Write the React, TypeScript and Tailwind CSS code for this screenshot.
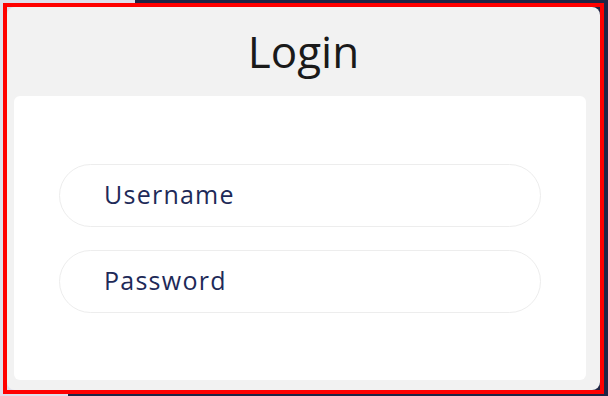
export default function App() {
  return (
    <div className="w-[608px] h-[396px] flex flex-col bg-[#1f2545] overflow-hidden">
      <div className="h-[3px] flex">
        <div className="w-[135px] bg-[#dfe0ec]" />
        <div className="flex-1" />
      </div>
      <div className="flex-1 flex min-h-0">
        <div className="w-[3px] bg-[#dfe0ec]" />
        <div className="flex-1 border-4 border-[#ff0000] bg-[linear-gradient(to_right,#dfe0ec_50%,#1f2545_50%)] flex">
          <div className="flex-1 flex flex-col bg-[#f2f2f2] rounded-lg">
            <div className="h-[89px] flex items-center justify-center">
              <h1 className="text-[44px] leading-none text-[#1a1a1a] font-['Open_Sans',sans-serif] -mt-px">
                Login
              </h1>
            </div>
            <div className="ml-[7px] mr-[14px] mb-[10px] flex-1 bg-white rounded-md flex flex-col justify-center gap-[23px] px-[45px]">
              <div className="h-[63px] rounded-full border border-[#ededed] flex items-center pl-[44px]">
                <span className="text-[25px] tracking-[0.05em] text-[#1e2a58] font-['Open_Sans',sans-serif]">Username</span>
              </div>
              <div className="h-[63px] rounded-full border border-[#ededed] flex items-center pl-[44px]">
                <span className="text-[25px] tracking-[0.05em] text-[#1e2a58] font-['Open_Sans',sans-serif]">Password</span>
              </div>
            </div>
          </div>
        </div>
        <div className="w-[4px]" />
      </div>
      <div className="h-[2px] flex">
        <div className="w-[68px] bg-[#dfe0ec]" />
        <div className="flex-1" />
      </div>
    </div>
  )
}
